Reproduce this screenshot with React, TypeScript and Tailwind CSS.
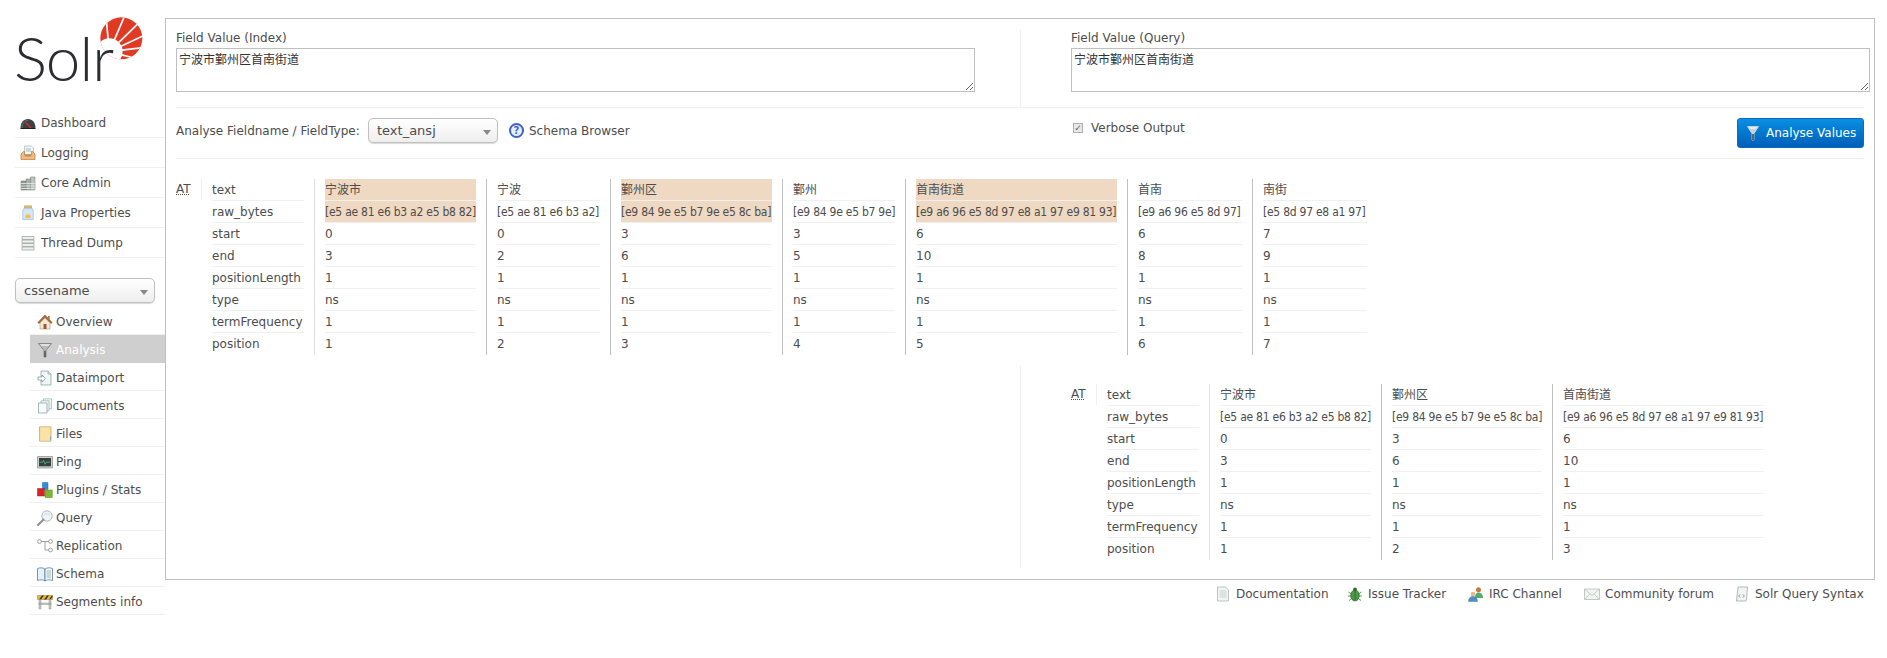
import React from "react";

const Svg = ({ children, size = 16 }: { children: React.ReactNode; size?: number }) => (
  <svg width={size} height={size} viewBox="0 0 16 16" className="shrink-0">
    {children}
  </svg>
);

const Funnel = ({ light = false }: { light?: boolean }) =>
  light ? (
    <Svg>
      <path d="M2.500 1.500h11L9 8.500V15H7V8.500Z" fill="#c9d0d6" stroke="#e4e8ec" strokeWidth="0.7" />
      <path d="M7.300 9h1.400v6H7.300Z" fill="#26323d" />
      <path d="M3.800 2.200h8.400l-1.200 1.600H5Z" fill="#fff" opacity="0.75" />
    </Svg>
  ) : (
    <Svg>
      <path d="M1.500 1.500h13L9 8.500V15H7V8.500Z" fill="#b9b9b9" stroke="#6f6f6f" strokeWidth="0.7" />
      <path d="M7.200 9h1.600v6H7.200Z" fill="#5a5a5a" />
      <path d="M3 2.200h10l-1.400 1.600H4.400Z" fill="#fff" opacity="0.75" />
    </Svg>
  );

const icons: Record<string, React.ReactNode> = {
  dashboard: (
    <Svg>
      <path d="M0.500 13.500C0.500 7.500 3.500 4 8 4s7.500 3.500 7.500 9.500Z" fill="#3c3f44" />
      <path d="M2 13.500C2 8.500 4.500 5.500 8 5.500" fill="none" stroke="#777" strokeWidth="0.8" />
      <path d="M5.500 7.500l6 6" stroke="#d8322a" strokeWidth="1.100" />
      <path d="M0.500 13.500h15" stroke="#222" strokeWidth="1" />
    </Svg>
  ),
  logging: (
    <Svg>
      <path d="M4.500 1h7l2 2v7h-9Z" fill="#f3f5f7" stroke="#9ab" strokeWidth="0.6" />
      <path d="M6 4h5M6 6h5" stroke="#8aa" strokeWidth="0.7" />
      <path d="M1 9l2.500-2.500h1V10h7V6.500h1L15 9v5.500H1Z" fill="#eebb82" stroke="#b97c3a" strokeWidth="0.7" />
      <path d="M5 9.500h6v2H5Z" fill="#c98a48" />
    </Svg>
  ),
  core: (
    <Svg>
      <path d="M1 6h5v9H1Z" fill="#8f9a94" stroke="#6c736f" strokeWidth="0.5" />
      <path d="M6 4h4.500v11H6Z" fill="#aab3ad" stroke="#6c736f" strokeWidth="0.5" />
      <path d="M10.500 2H15v13h-4.500Z" fill="#bfc6c1" stroke="#6c736f" strokeWidth="0.5" />
      <path d="M1 8.500h14M1 11h14M1 13.500h14" stroke="#e8ecea" strokeWidth="0.8" />
    </Svg>
  ),
  java: (
    <Svg>
      <path d="M4.500 0.800h7v2.400h-7Z" fill="#e2c272" stroke="#b08f3e" strokeWidth="0.5" />
      <path d="M4 3.200h8l1.200 2v9.300H2.800V5.200Z" fill="#d6e7f3" stroke="#8fb0c8" strokeWidth="0.6" />
      <path d="M6 9.500h4l1 3.500H5Z" fill="#e9c25f" />
    </Svg>
  ),
  thread: (
    <Svg>
      <path d="M2 1.500h12v3H2ZM2 5h12v3H2ZM2 8.500h12v3H2ZM2 12h12v3H2Z" fill="#eef0ee" stroke="#9a9f9b" strokeWidth="0.7" />
    </Svg>
  ),
  overview: (
    <Svg>
      <path d="M8 1L0.800 8.500l1.400 1L8 3.500l5.800 6 1.400-1Z" fill="#b06a3a" stroke="#6f4020" strokeWidth="0.5" />
      <path d="M3 9l5-5 5 5v6H3Z" fill="#f2e8d8" stroke="#a58a6a" strokeWidth="0.5" />
      <path d="M6.500 10h3v5h-3Z" fill="#a3552c" />
      <path d="M11 2h1.600v3.400L11 4Z" fill="#b06a3a" />
    </Svg>
  ),
  dataimport: (
    <Svg>
      <path d="M4 1h7l3 3v11H4Z" fill="#f2f6f6" stroke="#7f9c9c" strokeWidth="0.7" />
      <path d="M11 1v3h3" fill="#d5e2e2" stroke="#7f9c9c" strokeWidth="0.6" />
      <path d="M1 7h4V5l3.500 3.500L5 12v-2H1Z" fill="#fff" stroke="#6f8c8c" strokeWidth="0.7" />
    </Svg>
  ),
  documents: (
    <Svg>
      <path d="M6.500 0.800h8v10h-8Z" fill="#eef3f3" stroke="#8ba3a3" strokeWidth="0.6" />
      <path d="M4 2.800h8v10H4Z" fill="#f2f6f6" stroke="#8ba3a3" strokeWidth="0.6" />
      <path d="M1.500 5h8.500v10H1.500Z" fill="#f8fafa" stroke="#7f9c9c" strokeWidth="0.7" />
    </Svg>
  ),
  files: (
    <Svg>
      <path d="M2.500 0.800h11.500v14.400H2.500Z" fill="#f6d98f" stroke="#c5a35a" strokeWidth="0.7" />
      <path d="M3.500 1.500h9.500v13H3.500Z" fill="#f9e3a8" />
      <path d="M13.200 10c1.400 1 1.400 3 0 5Z" fill="#6aa6d8" />
    </Svg>
  ),
  ping: (
    <Svg>
      <path d="M0.500 2.500h15v11.500H0.500Z" fill="#cfd1d1" stroke="#8a8d8d" strokeWidth="0.7" />
      <path d="M2 4h12v8.300H2Z" fill="#3b3e3f" />
      <path d="M2.500 8.200h3l1-2 1.500 4 1-2h4" fill="none" stroke="#56c98a" strokeWidth="0.7" />
    </Svg>
  ),
  plugins: (
    <Svg>
      <path d="M5.500 0.500h5.500v7H5.500Z" fill="#2f8fd8" stroke="#1c6aa8" strokeWidth="0.5" />
      <path d="M0.500 6.500h7v7.500h-7Z" fill="#d8232a" stroke="#a01820" strokeWidth="0.5" />
      <path d="M8 8h7.300v7.500H8Z" fill="#79b82f" stroke="#558a1d" strokeWidth="0.5" />
    </Svg>
  ),
  query: (
    <Svg>
      <circle cx="10" cy="6" r="5.200" fill="#eef4f8" stroke="#a9b3ba" strokeWidth="0.9" />
      <path d="M7 5.500c1-2 4-2.400 6 0" fill="none" stroke="#c8d5dc" strokeWidth="1" />
      <path d="M1 15l5.500-5.500" stroke="#8f8f8f" strokeWidth="2" strokeLinecap="round" />
    </Svg>
  ),
  replication: (
    <Svg>
      <circle cx="2.500" cy="3.500" r="1.900" fill="#fff" stroke="#8a8a8a" strokeWidth="0.8" />
      <circle cx="13.500" cy="3.500" r="1.900" fill="#fff" stroke="#8a8a8a" strokeWidth="0.8" />
      <circle cx="13.500" cy="12" r="1.900" fill="#fff" stroke="#8a8a8a" strokeWidth="0.8" />
      <path d="M4.500 3.500h7M8 3.500V12h3.500" fill="none" stroke="#8a8a8a" strokeWidth="0.8" />
    </Svg>
  ),
  schema: (
    <Svg>
      <path d="M0.500 2.500C3 1.500 6 1.500 8 3v12c-2-1.500-5-1.500-7.500-0.500Z" fill="#e6f0f7" stroke="#3a6f9a" strokeWidth="0.7" />
      <path d="M8 3c2-1.500 5-1.500 7.500-0.500v12c-2.500-1-5.500-1-7.500 0.500Z" fill="#f5f7f8" stroke="#3a6f9a" strokeWidth="0.7" />
      <path d="M9.500 5h4.500M9.500 7h4.500M9.500 9h4.500M9.500 11h4.500" stroke="#8a9aa5" strokeWidth="0.7" />
    </Svg>
  ),
  segments: (
    <Svg>
      <path d="M0.500 1.500h15v4h-15Z" fill="#f2b632" stroke="#6e5a20" strokeWidth="0.4" />
      <path d="M2 5.500l3-4h2l-3 4ZM7 5.500l3-4h2l-3 4ZM12 5.500l3-4h0.500v1.500l-2 2.500Z" fill="#333" />
      <path d="M2 5.500h2v9.500H2ZM12 5.500h2v9.500h-2ZM2 9h12v1.500H2Z" fill="#c9ccca" stroke="#7c7f7d" strokeWidth="0.4" />
    </Svg>
  ),
  doc: (
    <Svg>
      <path d="M2.500 1h8l3 3v11h-11Z" fill="#f1f5f3" stroke="#9fb2aa" strokeWidth="0.7" />
      <path d="M4.500 5h7M4.500 7h7M4.500 9h7M4.500 11h7" stroke="#b5c4be" strokeWidth="0.7" />
    </Svg>
  ),
  bug: (
    <Svg>
      <ellipse cx="8" cy="9.500" rx="4.300" ry="5.500" fill="#4e9a45" stroke="#2a6126" strokeWidth="0.6" />
      <circle cx="8" cy="3.300" r="1.900" fill="#2f6f2a" />
      <path d="M8 4.500v10M1.500 6l3 2M14.500 6l-3 2M1 10h3M15 10h-3M2 14.500l2.700-2M14 14.500l-2.700-2" stroke="#2a6126" strokeWidth="0.7" />
    </Svg>
  ),
  irc: (
    <Svg>
      <circle cx="10.500" cy="3.700" r="2.500" fill="#c9763e" />
      <path d="M7 12c0-4 1.500-5.500 3.500-5.500S15 8 15 12Z" fill="#4fae6b" />
      <circle cx="5" cy="8" r="2.300" fill="#eab98c" />
      <path d="M0.500 15.500c0-3.500 2-5 4.500-5s4.500 1.500 4.500 5Z" fill="#4f8fc9" stroke="#2f6a9e" strokeWidth="0.4" />
    </Svg>
  ),
  mail: (
    <Svg>
      <path d="M0.500 3h15v10.500h-15Z" fill="#f0f3f1" stroke="#aab5af" strokeWidth="0.7" />
      <path d="M0.800 3.300L8 9.500l7.200-6.200M0.800 13.300l5.200-5.500M15.200 13.300L10 7.800" fill="none" stroke="#b9c3be" strokeWidth="0.7" />
    </Svg>
  ),
  scroll: (
    <Svg>
      <path d="M4 1h9.500l-1 12.500c0 1-0.500 1.500-1.500 1.500H2.500Z" fill="#f1f4f2" stroke="#8fa098" strokeWidth="0.7" />
      <path d="M6 8.500l-1.300 1.500L6 11.500M9 8.500l1.300 1.500L9 11.500" fill="none" stroke="#5e7068" strokeWidth="0.7" />
    </Svg>
  ),
};

const mainNav: [string, string][] = [
  ["dashboard", "Dashboard"],
  ["logging", "Logging"],
  ["core", "Core Admin"],
  ["java", "Java Properties"],
  ["thread", "Thread Dump"],
];

const coreNav: [string, string][] = [
  ["overview", "Overview"],
  ["analysis", "Analysis"],
  ["dataimport", "Dataimport"],
  ["documents", "Documents"],
  ["files", "Files"],
  ["ping", "Ping"],
  ["plugins", "Plugins / Stats"],
  ["query", "Query"],
  ["replication", "Replication"],
  ["schema", "Schema"],
  ["segments", "Segments info"],
];

const keys = ["text", "raw_bytes", "start", "end", "positionLength", "type", "termFrequency", "position"];

type Col = { w: string; hi?: boolean; first?: boolean; v: string[] };

const indexCols: Col[] = [
  { w: "w-[151px]", hi: true, first: true, v: ["宁波市", "[e5 ae 81 e6 b3 a2 e5 b8 82]", "0", "3", "1", "ns", "1", "1"] },
  { w: "w-[103px]", v: ["宁波", "[e5 ae 81 e6 b3 a2]", "0", "2", "1", "ns", "1", "2"] },
  { w: "w-[151px]", hi: true, v: ["鄞州区", "[e9 84 9e e5 b7 9e e5 8c ba]", "3", "6", "1", "ns", "1", "3"] },
  { w: "w-[102px]", v: ["鄞州", "[e9 84 9e e5 b7 9e]", "3", "5", "1", "ns", "1", "4"] },
  { w: "w-[201px]", hi: true, v: ["首南街道", "[e9 a6 96 e5 8d 97 e8 a1 97 e9 81 93]", "6", "10", "1", "ns", "1", "5"] },
  { w: "w-[104px]", v: ["首南", "[e9 a6 96 e5 8d 97]", "6", "8", "1", "ns", "1", "6"] },
  { w: "w-[104px]", v: ["南街", "[e5 8d 97 e8 a1 97]", "7", "9", "1", "ns", "1", "7"] },
];

const queryCols: Col[] = [
  { w: "w-[151px]", first: true, v: ["宁波市", "[e5 ae 81 e6 b3 a2 e5 b8 82]", "0", "3", "1", "ns", "1", "1"] },
  { w: "w-[150px]", v: ["鄞州区", "[e9 84 9e e5 b7 9e e5 8c ba]", "3", "6", "1", "ns", "1", "2"] },
  { w: "w-[201px]", v: ["首南街道", "[e9 a6 96 e5 8d 97 e8 a1 97 e9 81 93]", "6", "10", "1", "ns", "1", "3"] },
];

const footerLinks: [string, string, string][] = [
  ["doc", "Documentation", "w-[91px]"],
  ["bug", "Issue Tracker", "w-[80px]"],
  ["irc", "IRC Channel", "w-[75px]"],
  ["mail", "Community forum", "w-[109px]"],
  ["scroll", "Solr Query Syntax", "w-[110px]"],
];

const Row = ({ children, last, hi }: { children: React.ReactNode; last?: boolean; hi?: boolean }) => (
  <div
    className={`h-[22px] flex items-center whitespace-nowrap ${last ? "" : "border-b border-[#f0f0f0]"} ${hi ? "bg-[#f0d9c2]" : ""}`}
  >
    {children}
  </div>
);

const TokenTable = ({ cols }: { cols: Col[] }) => (
  <div className="flex items-start">
    <div className="w-[26px] shrink-0 h-[21px] border-r border-[#f0f0f0] leading-[21px]">
      <span className="underline decoration-dotted decoration-[#4d4d4d]">AT</span>
    </div>
    <div className="ml-[10px] w-[92px] shrink-0 mr-[10px] flex flex-col">
      {keys.map((k, i) => (
        <Row key={k} last={i === keys.length - 1}>
          {k}
        </Row>
      ))}
    </div>
    {cols.map((c) => (
      <div
        key={c.v[1]}
        className={`flex flex-col shrink-0 border-l px-[10px] ${c.first ? "border-[#e0e0e0]" : "border-[#c0c0c0]"}`}
      >
        {c.v.map((t, i) => (
          <div key={i} className={c.w}>
            <Row last={i === c.v.length - 1} hi={c.hi && i < 2}>
              {i === 1 ? (
                <span className="[font-family:'DejaVu_Sans_Condensed',sans-serif] tracking-[-0.25px]">{t}</span>
              ) : (
                t
              )}
            </Row>
          </div>
        ))}
      </div>
    ))}
  </div>
);

const Caret = () => (
  <span className="ml-auto w-0 h-0 border-x-[4px] border-x-transparent border-t-[5px] border-t-[#888] mt-[3px]" />
);

const selectCls =
  "flex items-center h-[25px] rounded-[5px] border border-[#c0c0c0] bg-gradient-to-b from-white to-[#eeeeee] shadow-[0_1px_1px_rgba(0,0,0,0.15)]";

const fieldCls =
  "block h-[44px] border border-[#c0c0c0] px-[2px] py-[2px] text-[12px] leading-[19px] text-[#333] outline-none";

const Logo = () => (
  <svg width="150" height="80" viewBox="0 0 450 240" className="absolute left-0 top-[10px]">
    <defs>
      <clipPath id="sun">
        <circle cx="334" cy="85" r="63" />
      </clipPath>
    </defs>
    <g clipPath="url(#sun)">
      <rect x="260" y="15" width="150" height="140" fill="#e03a24" />
      <g stroke="#fff" strokeWidth="5">
        <path d="M298 125L288 20" />
        <path d="M298 125L345 15" />
        <path d="M298 125L385 40" />
        <path d="M298 125L405 75" />
        <path d="M298 125L405 112" />
        <path d="M298 125L395 150" />
      </g>
      <circle cx="298" cy="125" r="40" fill="#fff" />
    </g>
  </svg>
);

export default function App() {
  return (
    <div className="w-[1887px] h-[658px] overflow-hidden bg-white text-[12px] text-[#4d4d4d] [font-family:'DejaVu_Sans','Noto_Sans_CJK_SC',sans-serif] flex items-start pl-[15px]">
      <aside className="w-[150px] shrink-0 flex flex-col">
        <div className="relative h-[108px] -ml-[5px] -mr-[5px]">
          <Logo />
          <span className="absolute left-[4px] top-[22px] text-[62px] leading-[70px] font-light text-[#2c2c33] tracking-[-1px] [font-family:Lato,sans-serif]">
            Solr
          </span>
        </div>
        <nav className="flex flex-col">
          {mainNav.map(([ic, label]) => (
            <div key={ic} className="h-[30px] flex items-center gap-[5px] pl-[5px] border-b border-[#f0f0f0]">
              {icons[ic]}
              <span>{label}</span>
            </div>
          ))}
        </nav>
        <div className={`${selectCls} w-[140px] mt-[20px] pl-[8px] pr-[6px] text-[13px]`}>
          <span>cssename</span>
          <Caret />
        </div>
        <nav className="flex flex-col ml-[15px] mt-[4px]">
          {coreNav.map(([ic, label]) => {
            const active = ic === "analysis";
            return (
              <div
                key={ic}
                className={`h-[28px] flex items-center gap-[3px] pl-[7px] pt-[2px] ${
                  active ? "bg-[#cfcfcf] text-white" : "border-b border-[#f0f0f0]"
                }`}
              >
                {active ? <Funnel /> : icons[ic]}
                <span>{label}</span>
              </div>
            );
          })}
        </nav>
      </aside>

      <div className="w-[1710px] shrink-0 flex flex-col">
        <main className="mt-[18px] h-[562px] border border-[#c0c0c0] pl-[10px] pr-[4px] pt-[10px] flex flex-col">
          <div className="flex h-[79px] border-b border-[#f0f0f0] mr-[6px]">
            <div className="w-[799px] shrink-0">
              <label className="block h-[19px] leading-[19px]">Field Value (Index)</label>
              <textarea readOnly className={`${fieldCls} w-[799px]`} defaultValue="宁波市鄞州区首南街道" />
            </div>
            <div className="ml-[45px] pl-[50px] border-l border-[#f0f0f0] w-[850px] shrink-0">
              <label className="block h-[19px] leading-[19px]">Field Value (Query)</label>
              <textarea readOnly className={`${fieldCls} w-[799px]`} defaultValue="宁波市鄞州区首南街道" />
            </div>
          </div>

          <div className="flex h-[51px] border-b border-[#f0f0f0] mr-[6px] pt-[10px] items-start">
            <div className="w-[897px] shrink-0 flex items-center h-[25px]">
              <span className="w-[192px] shrink-0 whitespace-nowrap">Analyse Fieldname / FieldType:</span>
              <div className={`${selectCls} w-[130px] pl-[8px] pr-[6px] text-[13px]`}>
                <span>text_ansj</span>
                <Caret />
              </div>
              <span className="ml-[11px] w-[15px] h-[15px] rounded-full border-2 border-[#3f63c9] bg-[#e8eefb] text-[#3f63c9] text-[10px] leading-[11px] text-center font-bold">
                ?
              </span>
              <span className="ml-[5px]">Schema Browser</span>
            </div>
            <div className="flex items-center h-[20px] gap-[8px]">
              <span className="w-[10px] h-[10px] border border-[#b0b0b0] bg-[#e8e8e8] text-[#666] text-[9px] leading-[8px] text-center">✓</span>
              <span>Verbose Output</span>
            </div>
            <button className="ml-auto w-[127px] h-[30px] rounded-[3px] bg-gradient-to-b from-[#0c8fe4] to-[#005fb8] border border-[#0a6cc0] text-white flex items-center pl-[7px] gap-[5px]">
              <Funnel light />
              <span className="whitespace-nowrap">Analyse Values</span>
            </button>
          </div>

          <div className="pt-[20px] h-[206px]">
            <TokenTable cols={indexCols} />
          </div>

          <div className="ml-[844px] border-l border-[#f0f0f0] h-[203px] pl-[50px] pt-[19px]">
            <TokenTable cols={queryCols} />
          </div>
        </main>

        <footer className="flex justify-end items-center gap-[20px] h-[26px] pr-[10px] mt-[1px]">
          {footerLinks.map(([ic, label, w]) => (
            <span key={ic} className="flex items-center gap-[5px]">
              {icons[ic]}
              <span className={`${w} whitespace-nowrap`}>{label}</span>
            </span>
          ))}
        </footer>
      </div>
    </div>
  );
}
